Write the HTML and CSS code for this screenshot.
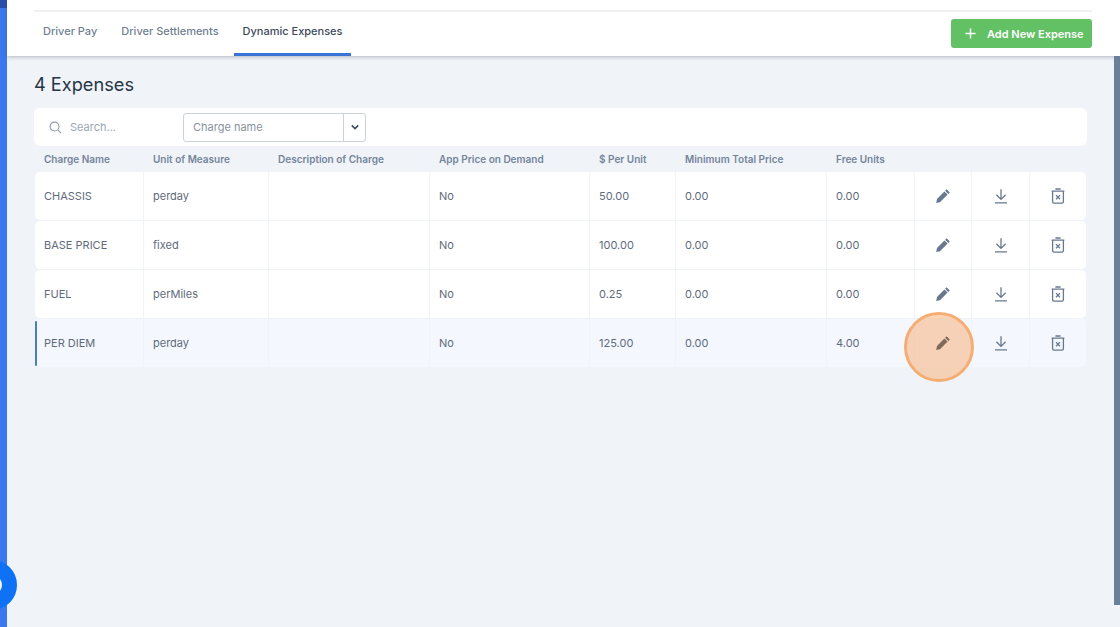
FILE: index.html
```html
<!DOCTYPE html>
<html lang="en">
<head>
<meta charset="utf-8">
<title>Dynamic Expenses</title>
<link rel="stylesheet" href="styles.css">
</head>
<body>
<svg class="defs" width="0" height="0">
  <symbol id="i-pencil" viewBox="0 0 16 16"><path d="M11.6 1.2 14.8 4.4 13.3 5.9 10.1 2.7zM9.4 3.4 12.6 6.6 5 14.2 1.2 15 2 11z"/></symbol>
  <symbol id="i-down" viewBox="0 0 16 16"><path d="M8 1.2v10.2M3.4 6.8 8 11.4l4.6-4.6M2 14.8h12"/></symbol>
  <symbol id="i-trash" viewBox="0 0 16 16"><path d="M1.6 3.2h12.8M5.4 1h5.2M2.6 3.4v10.4c0 .9.5 1.4 1.4 1.4h8c.9 0 1.4-.5 1.4-1.4V3.4"/><path d="M6 7.1l4 4.2M10 7.1l-4 4.2"/></symbol>
  <symbol id="i-plus" viewBox="0 0 12 12"><path d="M6 .5v11M.5 6h11"/></symbol>
</svg>
<div class="app">
  <div class="rail"><div class="rail-top"></div></div>
  <main class="main">
    <header class="header">
      <div class="rule"></div>
      <div class="header-row">
        <nav class="tabs">
          <a class="tab">Driver Pay</a>
          <a class="tab">Driver Settlements</a>
          <a class="tab active">Dynamic Expenses</a>
        </nav>
        <button class="add-btn"><svg class="plus"><use href="#i-plus"/></svg>Add New Expense</button>
      </div>
    </header>
    <section class="content">
      <h1 class="title">4 Expenses</h1>
      <div class="filters">
        <div class="search">
          <svg class="search-icon" viewBox="0 0 14 14"><circle cx="6" cy="6" r="4.8"/><path d="M9.5 9.5 13 13"/></svg>
          <span>Search...</span>
        </div>
        <div class="select">
          <span class="select-value">Charge name</span>
          <span class="select-arrow"><svg viewBox="0 0 10 10"><path d="M1.8 3.4 5 6.6l3.2-3.2"/></svg></span>
        </div>
      </div>
      <div class="grid head">
        <div>Charge Name</div><div>Unit of Measure</div><div>Description of Charge</div><div>App Price on Demand</div><div>$ Per Unit</div><div>Minimum Total Price</div><div>Free Units</div><div></div><div></div><div></div>
      </div>
      <div class="grid row">
        <div>CHASSIS</div><div>perday</div><div></div><div>No</div><div>50.00</div><div>0.00</div><div>0.00</div>
        <div class="act"><svg class="ico fill"><use href="#i-pencil"/></svg></div>
        <div class="act"><svg class="ico line"><use href="#i-down"/></svg></div>
        <div class="act"><svg class="ico line"><use href="#i-trash"/></svg></div>
      </div>
      <div class="grid row">
        <div>BASE PRICE</div><div>fixed</div><div></div><div>No</div><div>100.00</div><div>0.00</div><div>0.00</div>
        <div class="act"><svg class="ico fill"><use href="#i-pencil"/></svg></div>
        <div class="act"><svg class="ico line"><use href="#i-down"/></svg></div>
        <div class="act"><svg class="ico line"><use href="#i-trash"/></svg></div>
      </div>
      <div class="grid row">
        <div>FUEL</div><div>perMiles</div><div></div><div>No</div><div>0.25</div><div>0.00</div><div>0.00</div>
        <div class="act"><svg class="ico fill"><use href="#i-pencil"/></svg></div>
        <div class="act"><svg class="ico line"><use href="#i-down"/></svg></div>
        <div class="act"><svg class="ico line"><use href="#i-trash"/></svg></div>
      </div>
      <div class="grid row selected">
        <div>PER DIEM</div><div>perday</div><div></div><div>No</div><div>125.00</div><div>0.00</div><div>4.00</div>
        <div class="act"><svg class="ico fill spot"><use href="#i-pencil"/></svg></div>
        <div class="act"><svg class="ico line"><use href="#i-down"/></svg></div>
        <div class="act"><svg class="ico line"><use href="#i-trash"/></svg></div>
      </div>
    </section>
  </main>
</div>
<div class="highlight"></div>
<div class="chat"></div>
<div class="scroll-thumb"></div>
</body>
</html>
```
FILE: styles.css
```css
* { box-sizing: border-box; }
html, body { margin: 0; height: 100%; overflow: hidden; }
body { font-family: Inter, "Liberation Sans", sans-serif; color: #5f6b7c; background: #f0f4f9; }
.defs { position: absolute; }
.app { display: flex; height: 627px; }
.rail { width: 7px; flex: none; background: #3b78ee; }
.rail-top { height: 8px; background: #2a4fa8; }
.main { flex: 1; min-width: 0; display: flex; flex-direction: column; }
.header { height: 56px; flex: none; background: #fff; box-shadow: 0 1px 4px rgba(60, 70, 90, .35); padding: 10px 28px 0 27px; position: relative; }
.rule { height: 2px; background: #eef0f3; }
.header-row { display: flex; justify-content: space-between; align-items: flex-start; }
.tabs { display: flex; }
.tab { height: 44px; padding: 11px 9px 0; margin-right: 6px; font-size: 11px; line-height: 16px; font-weight: 500; color: #6f7f93; border-bottom: 3px solid transparent; }
.tab.active { color: #3d4a5c; border-bottom-color: #3a73d6; }
.tabs .tab:last-child { margin-right: 0; }
.add-btn { margin-top: 7px; width: 141px; height: 29px; padding: 0 0 0 14px; display: flex; align-items: center; border: 0; border-radius: 3px; background: #62c065; color: #fff; font: 600 11px Inter, "Liberation Sans", sans-serif; }
.plus { width: 11px; height: 11px; margin-right: 11px; fill: none; stroke: #fff; stroke-width: 1.6; }
.content { padding: 16px 34px 0 27px; }
.title { margin: 0; font-size: 18.2px; line-height: 24px; font-weight: 400; color: #263445; }
.filters { margin-top: 12px; height: 38px; width: 1053px; display: flex; align-items: center; padding-left: 15px; background: #fff; border-radius: 6px; }
.search { width: 134px; display: flex; align-items: center; gap: 8px; font-size: 11px; color: #9aa6b5; }
.search-icon { width: 13px; height: 13px; fill: none; stroke: #8f9cac; stroke-width: 1.2; }
.select { width: 183px; height: 29px; display: flex; align-items: center; border: 1px solid #cdd3db; border-radius: 3px; font-size: 11px; color: #87929f; }
.select-value { flex: 1; padding-left: 9px; }
.select-arrow { width: 22px; height: 100%; border-left: 1px solid #cdd3db; display: flex; align-items: center; justify-content: center; }
.select-arrow svg { width: 10px; height: 10px; fill: none; stroke: #3f4c5e; stroke-width: 1.6; }
.grid { display: grid; grid-template-columns: 109px 125px 161px 160px 86px 151px 88px 57px 58px 56px; width: 1051px; }
.head { height: 26px; align-items: center; font-size: 10px; font-weight: 600; color: #74849a; }
.head > div { padding-left: 10px; }
.row { position: relative; height: 48px; margin: 0 0 1px 1px; background: #fff; border-radius: 5px; font-size: 11px; color: #5f6b7c; }
.row > div { display: flex; align-items: center; padding-left: 9px; border-right: 1px solid #f0f3f7; }
.row > div:last-child { border-right: 0; }
.row > .act { padding-left: 0; justify-content: center; }
.selected { background: #f4f7fd; }
.selected::before { content: ""; position: absolute; left: 0; top: 2px; bottom: 1px; width: 2px; border-radius: 1px; background: #4a7fb8; }
.ico { width: 16px; height: 16px; }
.ico.fill { fill: #68788e; }
.ico.line { fill: none; stroke: #68788e; stroke-width: 1.3; }
.ico.spot { position: relative; z-index: 2; fill: #7f6a5b; }
.highlight { position: absolute; left: 904px; top: 312px; width: 70px; height: 70px; border-radius: 50%; background: rgba(250, 160, 90, .43); border: 3px solid #f4ad72; }
.chat { position: absolute; left: -33px; top: 560px; width: 50px; height: 50px; border-radius: 50%; border: 15px solid #0f72f5; background: #f0f4f9; }
.scroll-thumb { position: absolute; right: 0; top: 56px; width: 6px; height: 549px; background: #6a7f99; }
```
